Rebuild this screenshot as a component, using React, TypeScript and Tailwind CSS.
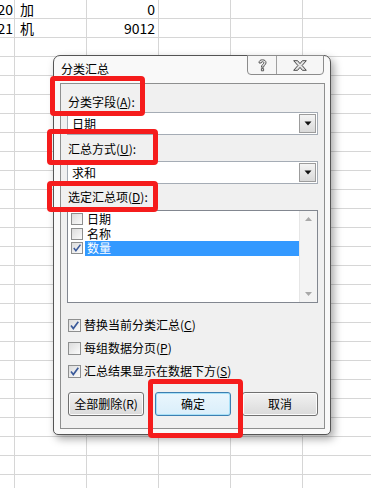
import React from "react";

const FONT = "font-['Noto_Sans_CJK_SC','Noto_Sans',sans-serif]";

function Box({ checked, size = 13 }: { checked?: boolean; size?: number }) {
  return (
    <span
      className="relative flex shrink-0 items-center justify-center border border-[#8e8f8f] bg-gradient-to-br from-[#dcdcdc] to-[#fbfbfb]"
      style={{ width: size, height: size }}
    >
      {checked && (
        <svg width={size - 2} height={size - 2} viewBox="0 0 11 11" className="absolute left-0 top-0">
          <path d="M2 5.5 L4.3 8.5 L9.3 1.8" fill="none" stroke="#3b5a9a" strokeWidth="1.7" />
        </svg>
      )}
    </span>
  );
}

function Combo({ value }: { value: string }) {
  return (
    <div className="flex h-[23px] items-stretch border border-[#a5acb5] bg-white">
      <div className="flex flex-1 items-center pl-[4px] text-[12px] text-black">{value}</div>
      <div className="m-px flex w-[17px] items-center justify-center border border-[#9c9c9c] bg-gradient-to-b from-[#f4f4f4] to-[#d9d9d9]">
        <svg width="8" height="5" viewBox="0 0 8 5">
          <path d="M0.5 0.5 H7.5 L4 4.5 Z" fill="#111" />
        </svg>
      </div>
    </div>
  );
}

function Btn({ label, focused }: { label: string; focused?: boolean }) {
  return (
    <div
      className={
        focused
          ? "flex h-[24px] flex-1 items-center justify-center rounded-[3px] border border-[#3c7fb1] bg-gradient-to-b from-[#eaf6fd] to-[#d9eefa] text-[12px] text-black shadow-[inset_0_0_0_1px_#a8e0f7]"
          : "flex h-[24px] flex-1 items-center justify-center rounded-[3px] border border-[#707070] bg-gradient-to-b from-[#f2f2f2] to-[#dadada] text-[12px] text-black shadow-[inset_0_0_0_1px_#fbfbfb]"
      }
    >
      {label}
    </div>
  );
}

const rows = Array.from({ length: 26 }, (_, i) => i);
const cells: Record<number, [string, string, string]> = {
  0: ["20", "加", "0"],
  1: ["21", "机", "9012"],
};

export default function App() {
  return (
    <div className={`relative h-[488px] w-[371px] overflow-hidden bg-white ${FONT}`}>
      {/* sheet */}
      <div className="flex flex-col">
        {rows.map((r) => {
          const c = cells[r];
          return (
            <div key={r} className="flex h-[19px] border-b border-[#d6d6d6] text-[14px] leading-[18px] text-black">
              <div className="flex w-[15px] shrink-0 justify-end overflow-hidden border-r border-[#d6d6d6] pr-[1px]">
                <span className="whitespace-nowrap">{c ? c[0] : ""}</span>
              </div>
              <div className="w-[72px] shrink-0 border-r border-[#d6d6d6] pl-[5px]">{c ? c[1] : ""}</div>
              <div className="w-[72px] shrink-0 border-r border-[#d6d6d6] pr-[3px] text-right">{c ? c[2] : ""}</div>
              <div className="w-[72px] shrink-0 border-r border-[#d6d6d6]" />
              <div className="w-[72px] shrink-0 border-r border-[#d6d6d6]" />
              <div className="w-[72px] shrink-0 border-r border-[#d6d6d6]" />
            </div>
          );
        })}
      </div>

      {/* dialog window */}
      <div className="absolute left-[53px] top-[55px] flex h-[380px] w-[278px] flex-col rounded-t-[7px] rounded-b-[5px] border border-[#555] bg-[#f9f9f9] shadow-[3px_4px_8px_rgba(0,0,0,0.35)]">
        <div className="relative h-[27px] shrink-0">
          <span className="absolute left-[7px] top-[5px] text-[12px] leading-[16px] text-black">分类汇总</span>
          <div className="absolute left-[193px] top-[-1px] flex h-[20px] w-[77px] rounded-b-[4px] border border-[#8c8c8c] bg-[#f6f6f6]">
            <div className="flex w-[29px] items-center justify-center border-r border-[#a0a0a0]">
              <svg width="9" height="13" viewBox="0 0 9 13">
                <path
                  d="M1 4 C1 1.5 2.5 0.8 4.5 0.8 C6.8 0.8 8 2 8 3.8 C8 5.8 5.6 6 5.6 8.2 L3.4 8.2 C3.4 5.4 5.8 5.2 5.8 3.9 C5.8 3 5.3 2.7 4.5 2.7 C3.6 2.7 3.2 3.2 3.2 4 Z M3.4 9.6 H5.6 V11.8 H3.4 Z"
                  fill="#e8e8e8"
                  stroke="#4a4a4a"
                  strokeWidth="0.9"
                />
              </svg>
            </div>
            <div className="flex flex-1 items-center justify-center">
              <svg width="14" height="11" viewBox="0 0 14 11">
                <path
                  d="M0.7 0.7 H4.6 L7 3.6 L9.4 0.7 H13.3 L9.1 5.5 L13.3 10.3 H9.4 L7 7.4 L4.6 10.3 H0.7 L4.9 5.5 Z"
                  fill="#e4e4e4"
                  stroke="#4a4a4a"
                  strokeWidth="1"
                  strokeLinejoin="round"
                />
              </svg>
            </div>
          </div>
        </div>

        {/* client area */}
        <div className="mb-[5px] ml-[6px] mr-[5px] flex flex-1 flex-col border border-[#8e8f8f] bg-[#f0f0f0] px-[6px] pb-[10px] pt-[10px] text-[12px] leading-[16px] text-black">
          <div className="pl-[1px]">
            分类字段(<span className="underline">A</span>):
          </div>
          <div className="mt-[2px]">
            <Combo value="日期" />
          </div>
          <div className="mt-[6px] pl-[1px]">
            汇总方式(<span className="underline">U</span>):
          </div>
          <div className="mt-[4px]">
            <Combo value="求和" />
          </div>
          <div className="mt-[5px] pl-[1px]">
            选定汇总项(<span className="underline">D</span>):
          </div>
          <div className="mt-[5px] flex h-[93px] border border-[#828790] bg-white">
            <div className="flex flex-1 flex-col pl-[3px] pt-[1px]">
              {[
                ["日期", false],
                ["名称", false],
                ["数量", true],
              ].map(([label, sel]) => (
                <div key={label as string} className="flex h-[14.5px] items-center gap-[2px] leading-[14px]">
                  <Box size={12} checked={sel as boolean} />
                  <span
                    className={
                      sel
                        ? "flex h-full flex-1 items-center bg-[#3399ff] pl-[2px] text-white"
                        : "flex h-full flex-1 items-center pl-[2px]"
                    }
                  >
                    {label as string}
                  </span>
                </div>
              ))}
            </div>
            <div className="flex w-[18px] flex-col items-center justify-between border-l border-[#e6e6e6] bg-[#f3f3f3] py-[6px]">
              <svg width="7" height="4" viewBox="0 0 7 4">
                <path d="M0 4 L3.5 0 L7 4 Z" fill="#a8a8a8" />
              </svg>
              <svg width="7" height="4" viewBox="0 0 7 4">
                <path d="M0 0 L7 0 L3.5 4 Z" fill="#a8a8a8" />
              </svg>
            </div>
          </div>

          <div className="mt-[14px] flex flex-col gap-[7px]">
            <div className="flex items-center gap-[3px] pl-[1px]">
              <Box checked />
              <span>
                替换当前分类汇总(<span className="underline">C</span>)
              </span>
            </div>
            <div className="flex items-center gap-[3px] pl-[1px]">
              <Box />
              <span>
                每组数据分页(<span className="underline">P</span>)
              </span>
            </div>
            <div className="flex items-center gap-[3px] pl-[1px]">
              <Box checked />
              <span>
                汇总结果显示在数据下方(<span className="underline">S</span>)
              </span>
            </div>
          </div>

          <div className="mt-[13px] flex gap-[11px] pl-[1px]">
            <Btn label="全部删除(R)" />
            <Btn label="确定" focused />
            <Btn label="取消" />
          </div>
        </div>
      </div>

      {/* red annotation boxes */}
      <div className="absolute left-[50px] top-[76px] h-[40px] w-[95px] rounded-[4px] border-[5px] border-[#f51c1c]" />
      <div className="absolute left-[47px] top-[129px] h-[36px] w-[111px] rounded-[4px] border-[5px] border-[#f51c1c]" />
      <div className="absolute left-[47px] top-[181px] h-[31px] w-[111px] rounded-[4px] border-[5px] border-[#f51c1c]" />
      <div className="absolute left-[148px] top-[379px] h-[59px] w-[95px] rounded-[4px] border-[5px] border-[#f51c1c]" />
    </div>
  );
}
